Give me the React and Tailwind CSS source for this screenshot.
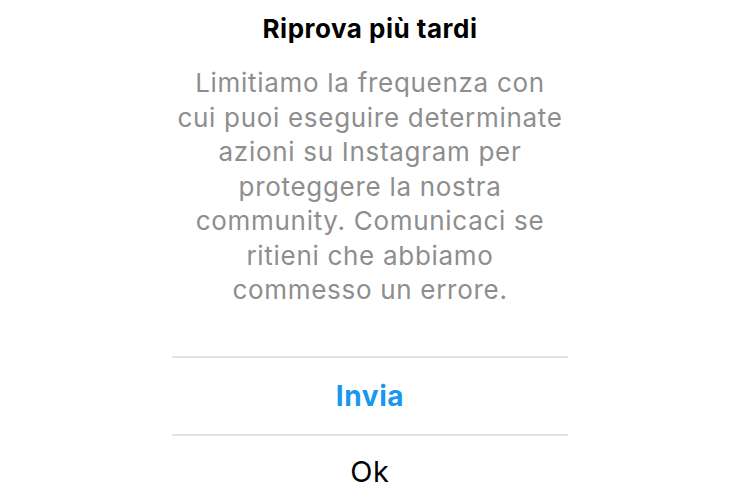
// Dialogo "Riprova più tardi" (limite azioni Instagram)
export default function App() {
  return (
    <div
      className="w-[740px] h-[500px] bg-white overflow-hidden flex flex-col items-center"
      style={{ fontFamily: 'Inter, "Liberation Sans", Arial, sans-serif' }}
    >
      <h1 className="mt-[12px] h-[34px] leading-[34px] text-[26px] font-bold text-black tracking-[0.5px]">
        Riprova più tardi
      </h1>

      <p className="mt-[20px] text-center text-[26px] leading-[34.5px] text-[#8e8e8e] tracking-[0.7px]">
        Limitiamo la frequenza con<br />
        cui puoi eseguire determinate<br />
        azioni su Instagram per<br />
        proteggere la nostra<br />
        community. Comunicaci se<br />
        ritieni che abbiamo<br />
        commesso un errore.
      </p>

      <div className="mt-[48px] w-[396px] flex flex-col">
        <div className="h-[2px] bg-[#e3e3e3]" />
        <button className="h-[76px] flex items-center justify-center text-[28px] font-bold text-[#1a97f0] tracking-[0.6px]">
          Invia
        </button>
        <div className="h-[2px] bg-[#e3e3e3]" />
        <button className="h-[72px] flex items-center justify-center text-[29px] text-black tracking-[0.8px]">
          Ok
        </button>
      </div>
    </div>
  )
}
